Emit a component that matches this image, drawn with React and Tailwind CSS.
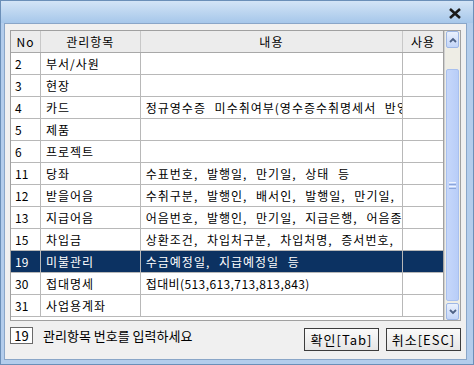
import React from "react";

const rows = [
    { no: "2", name: "부서/사원", desc: "" },
    { no: "3", name: "현장", desc: "" },
    { no: "4", name: "카드", desc: "정규영수증 미수취여부(영수증수취명세서 반영여부)" },
    { no: "5", name: "제품", desc: "" },
    { no: "6", name: "프로젝트", desc: "" },
    { no: "11", name: "당좌", desc: "수표번호, 발행일, 만기일, 상태 등" },
    { no: "12", name: "받을어음", desc: "수취구분, 발행인, 배서인, 발행일, 만기일, 지급은행" },
    { no: "13", name: "지급어음", desc: "어음번호, 발행인, 만기일, 지급은행, 어음종류 등" },
    { no: "15", name: "차입금", desc: "상환조건, 차입처구분, 차입처명, 증서번호, 이자율" },
    { no: "19", name: "미불관리", desc: "수금예정일, 지급예정일 등", selected: true },
    { no: "30", name: "접대명세", desc: "접대비(513,613,713,813,843)", digits: true },
    { no: "31", name: "사업용계좌", desc: "" },
];

export default function App() {
    return (
        <div
            className="w-[474px] h-[365px] flex flex-col bg-[#b3cdec] border border-[#6b8fb8] text-[12px] text-black"
            style={{ fontFamily: "'Noto Sans CJK KR', 'Liberation Sans', sans-serif" }}
        >
            {/* title bar */}
            <div className="h-[22px] shrink-0 flex items-center justify-end pr-[11px] pt-[2px] bg-gradient-to-b from-[#d3e4f6] to-[#a6c7ea]">
                <svg width="14" height="11" viewBox="0 0 14 11">
                    <path d="M2 1 L12 10 M12 1 L2 10" stroke="#1a1a1a" strokeWidth="2.6" />
                </svg>
            </div>

            {/* body */}
            <div className="flex-1 ml-[3px] mr-[6px] mb-[4px] bg-[#f0f0f0] border border-[#8aa6c8] flex flex-col px-[5px] pt-[6px]">
                <div className="h-[291px] flex border border-[#a0a0a0] bg-white">
                    <div className="w-[433px] flex flex-col border-r border-[#a0a0a0]">
                        {/* header */}
                        <div className="h-[22px] flex bg-[#ececec] border-b border-[#a8a8a8] tracking-[1px]">
                            <div className="w-[30px] border-r border-[#c8c8c8] flex items-center justify-center">No</div>
                            <div className="w-[100px] border-r border-[#c8c8c8] flex items-center justify-center">관리항목</div>
                            <div className="w-[263px] border-r border-[#c8c8c8] flex items-center justify-center">내용</div>
                            <div className="w-[40px] flex items-center justify-center">사용</div>
                        </div>
                        {rows.map((r) => (
                            <div
                                key={r.no}
                                className={
                                    r.selected
                                        ? "h-[22px] flex bg-[#0c3262] text-white border-b border-[#b8b8b8]"
                                        : "h-[22px] flex border-b border-[#b8b8b8]"
                                }
                            >
                                <div className="w-[30px] border-r border-[#b8b8b8] flex items-center pl-[4px]">{r.no}</div>
                                <div className="w-[100px] border-r border-[#b8b8b8] flex items-center pl-[5px] whitespace-nowrap tracking-[1px]">{r.name}</div>
                                <div
                                    className={
                                        r.digits
                                            ? "w-[263px] border-r border-[#b8b8b8] flex items-center pl-[5px] whitespace-nowrap overflow-hidden tracking-[0.4px]"
                                            : "w-[263px] border-r border-[#b8b8b8] flex items-center pl-[5px] whitespace-nowrap overflow-hidden tracking-[1px] [word-spacing:5px]"
                                    }
                                >
                                    {r.desc}
                                </div>
                                <div className="w-[40px]"></div>
                            </div>
                        ))}
                    </div>

                    {/* scrollbar */}
                    <div className="w-[18px] flex flex-col bg-[#eeede5] border-l border-[#d0d0d0] px-[1px]">
                        <div className="h-[17px] rounded-[2px] border border-[#9eb7e6] bg-gradient-to-b from-[#eaf1fd] to-[#c3d5f8] flex items-center justify-center">
                            <svg width="8" height="6" viewBox="0 0 8 6">
                                <path d="M1 5 L4 2 L7 5" stroke="#4d6185" strokeWidth="1.8" fill="none" />
                            </svg>
                        </div>
                        <div className="h-[21px]"></div>
                        <div className="flex-1 rounded-[2px] border border-[#a8c0ef] bg-gradient-to-r from-[#c6d7fa] to-[#b8cdf8] flex items-center justify-center">
                            <div className="flex flex-col gap-[1px]">
                                <div className="w-[7px] h-[1px] bg-[#eef3fe]"></div>
                                <div className="w-[7px] h-[1px] bg-[#8ca6da]"></div>
                                <div className="w-[7px] h-[1px] bg-[#eef3fe]"></div>
                                <div className="w-[7px] h-[1px] bg-[#8ca6da]"></div>
                            </div>
                        </div>
                        <div className="h-[2px]"></div>
                        <div className="h-[17px] rounded-[2px] border border-[#9eb7e6] bg-gradient-to-b from-[#eaf1fd] to-[#c3d5f8] flex items-center justify-center">
                            <svg width="8" height="6" viewBox="0 0 8 6">
                                <path d="M1 1 L4 4 L7 1" stroke="#4d6185" strokeWidth="1.8" fill="none" />
                            </svg>
                        </div>
                    </div>
                </div>

                {/* footer */}
                <div className="flex items-start mt-[6px]">
                    <div className="w-[23px] h-[17px] border border-[#6a6a6a] bg-white flex items-center justify-center text-[13px] leading-none">19</div>
                    <div className="ml-[10px] mt-[1px] text-[13px] leading-[15px]">관리항목 번호를 입력하세요</div>
                    <div className="flex-1"></div>
                    <div className="flex gap-[7px] mt-[1px]">
                        <div className="w-[75px] h-[23px] border border-[#3c3c3c] bg-gradient-to-b from-[#fafafa] to-[#e6e6e6] flex items-center justify-center text-[13px] tracking-[1px]">확인[Tab]</div>
                        <div className="w-[75px] h-[23px] border border-[#3c3c3c] bg-gradient-to-b from-[#fafafa] to-[#e6e6e6] flex items-center justify-center text-[13px] tracking-[1px]">취소[ESC]</div>
                    </div>
                </div>
            </div>
        </div>
    );
}
